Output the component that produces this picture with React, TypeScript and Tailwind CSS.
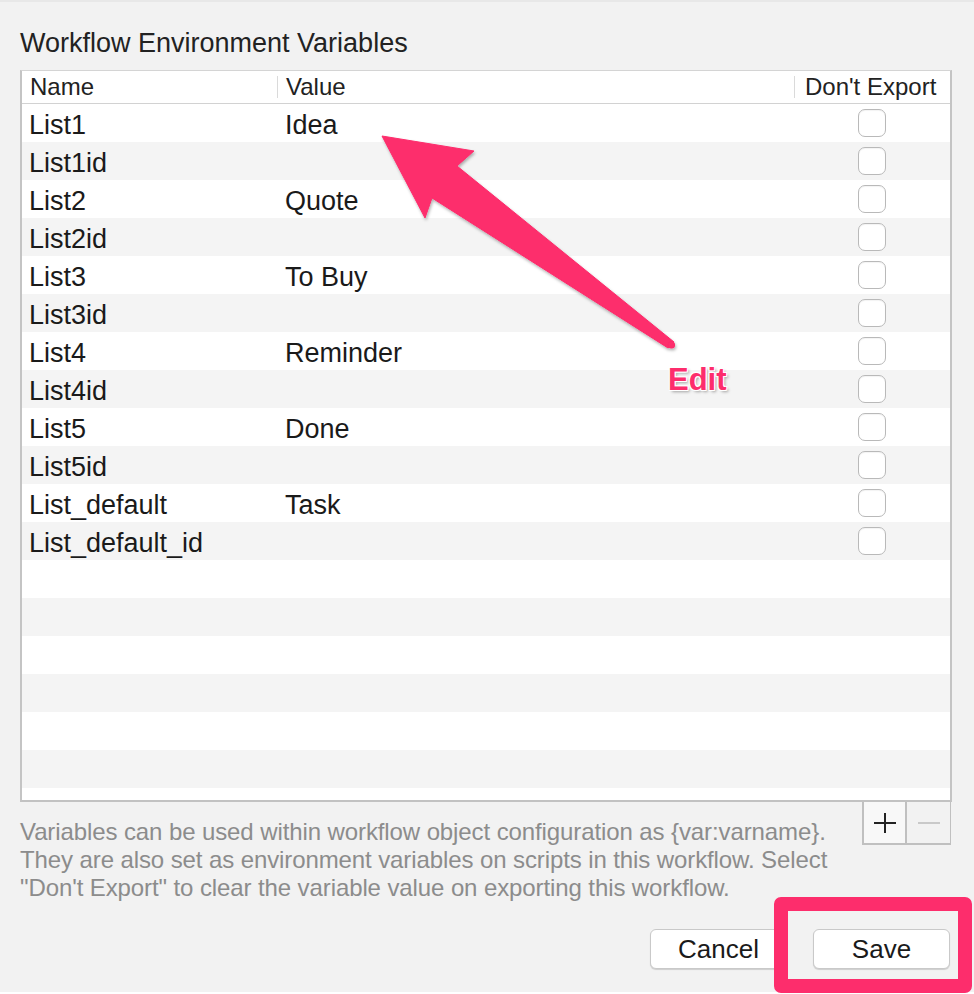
import React from "react";

const rows: [string, string][] = [
  ["List1", "Idea"],
  ["List1id", ""],
  ["List2", "Quote"],
  ["List2id", ""],
  ["List3", "To Buy"],
  ["List3id", ""],
  ["List4", "Reminder"],
  ["List4id", ""],
  ["List5", "Done"],
  ["List5id", ""],
  ["List_default", "Task"],
  ["List_default_id", ""],
];

const allRows: ([string, string] | null)[] = [...rows, null, null, null, null, null, null, null];

function Checkbox() {
  return (
    <div className="w-[28px] h-[28px] rounded-[7px] border border-[#b9b9b9] bg-white shadow-[inset_0_1px_1px_rgba(0,0,0,0.05)]" />
  );
}

export default function App() {
  return (
    <div
      className="relative w-[974px] h-[994px] overflow-hidden bg-[#f2f2f2] flex flex-col"
      style={{ fontFamily: '"Liberation Sans", Arial, sans-serif' }}
    >
      <div className="h-[2px] bg-[#e8e8e8]" />
      <div className="flex-1 flex flex-col pl-[20px] pr-[22px] pt-[26px]">
        <div className="h-[30px] leading-[30px] text-[27px] text-[#222]">Workflow Environment Variables</div>
        <div className="mt-[12px] h-[732px] bg-white border-t border-t-[#d4d4d4] border-x-2 border-x-[#c4c4c4] border-b-2 border-b-[#c2c2c2] flex flex-col overflow-hidden">
          <div className="h-[33px] shrink-0 border-b border-[#d2d2d2] flex items-center text-[24px] text-[#222] leading-[32px]">
            <div className="w-[255px] pl-[8px]">Name</div>
            <div className="flex-1 flex items-center">
              <div className="w-px h-[22px] bg-[#dadada]" />
              <div className="pl-[8px]">Value</div>
            </div>
            <div className="w-[156px] flex items-center">
              <div className="w-px h-[22px] bg-[#dadada]" />
              <div className="pl-[10px]">Don't Export</div>
            </div>
          </div>
          {allRows.map((r, i) => (
            <div
              key={i}
              className={`h-[38px] shrink-0 flex items-start text-[27px] text-[#1a1a1a] ${
                i % 2 === 0 ? "bg-white" : "bg-[#f4f4f4]"
              }`}
            >
              <div className="w-[255px] pl-[7px] whitespace-nowrap leading-[42px]">{r ? r[0] : ""}</div>
              <div className="flex-1 pl-[8px] whitespace-nowrap leading-[42px]">{r ? r[1] : ""}</div>
              <div className="w-[156px] h-full flex items-center justify-center">{r ? <Checkbox /> : null}</div>
            </div>
          ))}
        </div>
        <div className="flex items-start">
          <div className="flex-1 pt-[16px] text-[24px] leading-[28px] text-[#8c8c8c] tracking-[-0.1px]">
            <div className="whitespace-nowrap">Variables can be used within workflow object configuration as {"{var:varname}"}.</div>
            <div className="whitespace-nowrap">They are also set as environment variables on scripts in this workflow. Select</div>
            <div className="whitespace-nowrap">"Don't Export" to clear the variable value on exporting this workflow.</div>
          </div>
          <div className="mr-[1px] h-[43px] flex border-l-2 border-b-2 border-r border-[#c0c0c0]">
            <div className="w-[43px] h-full bg-[#f8f8f8] border-r-2 border-[#c0c0c0] flex items-center justify-center">
              <svg width="24" height="24" viewBox="0 0 24 24">
                <line x1="12" y1="2" x2="12" y2="22" stroke="#222" strokeWidth="2" />
                <line x1="1" y1="12" x2="23" y2="12" stroke="#222" strokeWidth="2" />
              </svg>
            </div>
            <div className="w-[43px] h-full bg-[#f2f2f2] flex items-center justify-center">
              <svg width="24" height="24" viewBox="0 0 24 24">
                <line x1="1" y1="12" x2="23" y2="12" stroke="#c9c9c9" strokeWidth="2" />
              </svg>
            </div>
          </div>
        </div>
        <div className="mt-[27px] flex justify-end gap-[26px] pr-[2px]">
          <button className="w-[137px] h-[40px] rounded-[6px] bg-white border border-[#c9c9c9] shadow-[0_1px_1px_rgba(0,0,0,0.15)] text-[26px] text-[#1a1a1a] leading-[38px]">
            Cancel
          </button>
          <button className="w-[137px] h-[40px] rounded-[6px] bg-white border border-[#c9c9c9] shadow-[0_1px_1px_rgba(0,0,0,0.15)] text-[26px] text-[#1a1a1a] leading-[38px]">
            Save
          </button>
        </div>
      </div>
      <div className="h-[2px] bg-white" />

      {/* Annotations */}
      <div className="absolute left-[774px] top-[897px] w-[198px] h-[96px] border-[14px] border-[#fd2d6c] rounded-[7px]" />
      <svg className="absolute left-0 top-0 pointer-events-none" width="974" height="994" viewBox="0 0 974 994">
        <defs>
          <filter id="sh" x="-20%" y="-20%" width="140%" height="140%">
            <feDropShadow dx="1" dy="2" stdDeviation="1.5" floodColor="#000" floodOpacity="0.3" />
          </filter>
        </defs>
        <g filter="url(#sh)">
          <polygon
            points="382,136 474,151 457,166 674,342 668,348 432,198 425,218"
            fill="#fd2d6c"
            strokeLinejoin="round"
            stroke="#fd2d6c"
            strokeWidth="1"
          />
          <circle cx="671.5" cy="345" r="3.6" fill="#fd2d6c" />
        </g>
      </svg>
      <div className="absolute left-[668px] top-[364px] text-[31px] leading-[31px] font-bold text-[#fd2d6c] [text-shadow:-1px_-1px_0_#fff,1px_-1px_0_#fff,-1px_1px_0_#fff,1px_1px_0_#fff,0_0_2px_#fff,2px_2px_3px_rgba(0,0,0,0.35)]">
        Edit
      </div>
    </div>
  );
}
